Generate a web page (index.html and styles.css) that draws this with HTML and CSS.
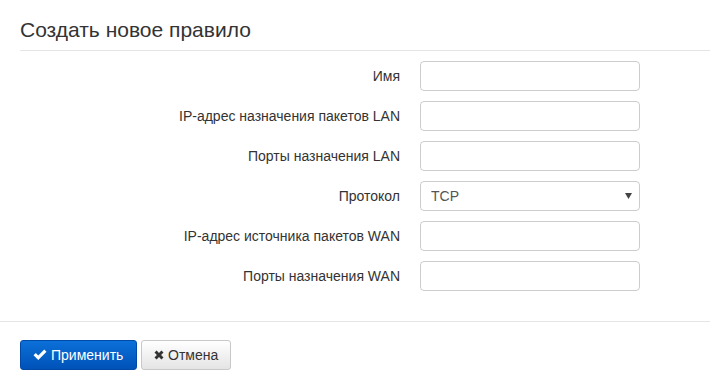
FILE: index.html
```html
<!DOCTYPE html>
<html lang="ru">
<head>
<meta charset="utf-8">
<link rel="stylesheet" href="styles.css">
</head>
<body>
<div class="panel">
  <div class="head"><h2 class="title">Создать новое правило</h2></div>
  <form class="form">
    <div class="row"><label class="lbl">Имя</label><input class="ctl" type="text"></div>
    <div class="row"><label class="lbl">IP-адрес назначения пакетов LAN</label><input class="ctl" type="text"></div>
    <div class="row"><label class="lbl">Порты назначения LAN</label><input class="ctl" type="text"></div>
    <div class="row"><label class="lbl">Протокол</label>
      <div class="sel-wrap">
        <select class="ctl sel"><option>TCP</option><option>UDP</option></select>
        <svg class="caret" width="7" height="6" viewBox="0 0 7 6"><path d="M0 0H7L3.5 6Z" fill="#444"/></svg>
      </div>
    </div>
    <div class="row"><label class="lbl">IP-адрес источника пакетов WAN</label><input class="ctl" type="text"></div>
    <div class="row"><label class="lbl">Порты назначения WAN</label><input class="ctl" type="text"></div>
  </form>
  <div class="foot">
    <button class="btn btn-primary" type="button"><svg class="ico" width="14" height="12" viewBox="0 0 14 12"><path d="M0.5 6.2L2.8 3.9L5.3 6.4L11.2 0.5L13.5 2.8L5.3 11Z" fill="#fff"/></svg>Применить</button>
    <button class="btn btn-default" type="button"><svg class="ico" width="10" height="10" viewBox="0 0 10 10"><path d="M0.5 2.6L2.6 0.5L5 2.9L7.4 0.5L9.5 2.6L7.1 5L9.5 7.4L7.4 9.5L5 7.1L2.6 9.5L0.5 7.4L2.9 5Z" fill="#333"/></svg>Отмена</button>
  </div>
</div>
</body>
</html>
```
FILE: styles.css
```css
html, body { margin: 0; padding: 0; background: #fff; }
body { font-family: "Liberation Sans", Arial, sans-serif; color: #333; font-size: 14px; }
.panel { width: 710px; }
.head { margin-left: 20px; border-bottom: 1px solid #e5e5e5; height: 51px; box-sizing: border-box; }
.title { margin: 0; padding-top: 18px; font-size: 21px; font-weight: normal; line-height: 24px; color: #333; }
.form { padding: 10px 0 30px; display: flex; flex-direction: column; gap: 10px; }
.row { display: flex; align-items: center; height: 30px; }
.lbl { width: 420px; text-align: right; padding-right: 20px; box-sizing: border-box; color: #333; }
.ctl { width: 220px; height: 30px; box-sizing: border-box; border: 1px solid #ccc; border-radius: 4px; background: #fff; font-family: inherit; font-size: 14px; color: #555; padding: 4px 10px; margin: 0; outline: none; }
.sel-wrap { position: relative; width: 220px; height: 30px; }
.sel { appearance: none; -webkit-appearance: none; }
.caret { position: absolute; right: 8px; top: 12px; }
.foot { border-top: 1px solid #e5e5e5; padding: 18px 20px 20px; display: flex; gap: 4px; }
.btn { height: 30px; box-sizing: border-box; border-radius: 3px; font-family: inherit; font-size: 14px; padding: 0 12px; display: flex; align-items: center; gap: 4px; cursor: pointer; }
.btn-primary { width: 117px; color: #fff; background: linear-gradient(#0b70d8, #0052b8); border: 1px solid #0049a6; }
.btn-default { width: 90px; color: #333; background: linear-gradient(#fff, #e4e4e4); border: 1px solid #c8c8c8; }
.ico { flex: none; }
```
